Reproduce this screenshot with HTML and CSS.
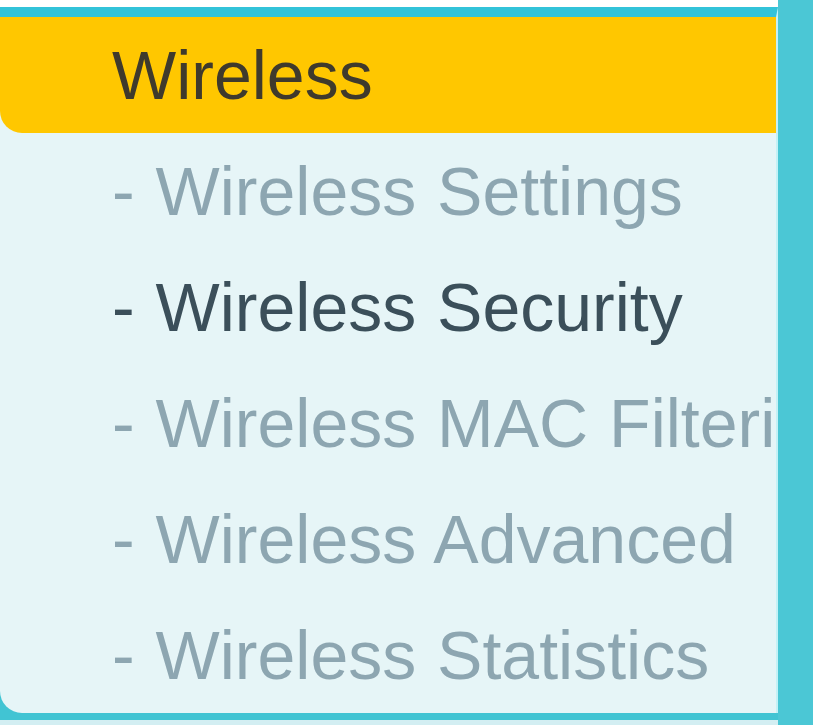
FILE: index.html
```html
<!DOCTYPE html>
<html>
<head>
  <title>Wireless</title>
  <link rel="stylesheet" href="styles.css">
</head>
<body>

  <div class="frame">
    <div class="menu-col">
      <div class="top-strip"></div>
      <div class="menu-area">
        <div class="menu">
          <div class="menu-title">Wireless</div>
          <div class="menu-item">- Wireless Settings</div>
          <div class="menu-item active">- Wireless Security</div>
          <div class="menu-item">- Wireless MAC Filtering</div>
          <div class="menu-item">- Wireless Advanced</div>
          <div class="menu-item">- Wireless Statistics</div>
        </div>
      </div>
      <div class="bottom-strip"></div>
    </div>
    <div class="side"></div>
  </div>

</body>
</html>
```

FILE: styles.css
```css
body {
  margin: 0;
  font-family: "Liberation Sans", Arial, sans-serif;
  background-color: #fff;
}

.frame {
  display: flex;
  width: 813px;
  height: 725px;
  overflow: hidden;
}

.menu-col {
  width: 778px;
  display: flex;
  flex-direction: column;
}

.top-strip {
  height: 7px;
  background-color: #fff;
}

.menu-area {
  background-color: #41c4d3;
  padding-bottom: 7px;
}

.menu {
  background-color: #e6f5f7;
  border-top: 10px solid #32c3d9;
  border-right: 2px solid #c4f1f6;
  border-radius: 0 0 0 22px;
  overflow: hidden;
}

.menu-title,
.menu-item {
  height: 116px;
  line-height: 116px;
  padding-left: 112px;
  font-size: 68px;
  word-spacing: 2px;
  white-space: nowrap;
  overflow: hidden;
}

.menu-title {
  background-color: #ffc700;
  color: #3f3a2c;
  border-radius: 0 0 0 22px;
}

.menu-item {
  color: #8da6b1;
}

.menu-item.active {
  color: #3b4f5a;
}

.bottom-strip {
  flex: 1;
  background-color: #d3eef2;
}

.side {
  flex: 1;
  background-color: #4bc7d5;
}
```
